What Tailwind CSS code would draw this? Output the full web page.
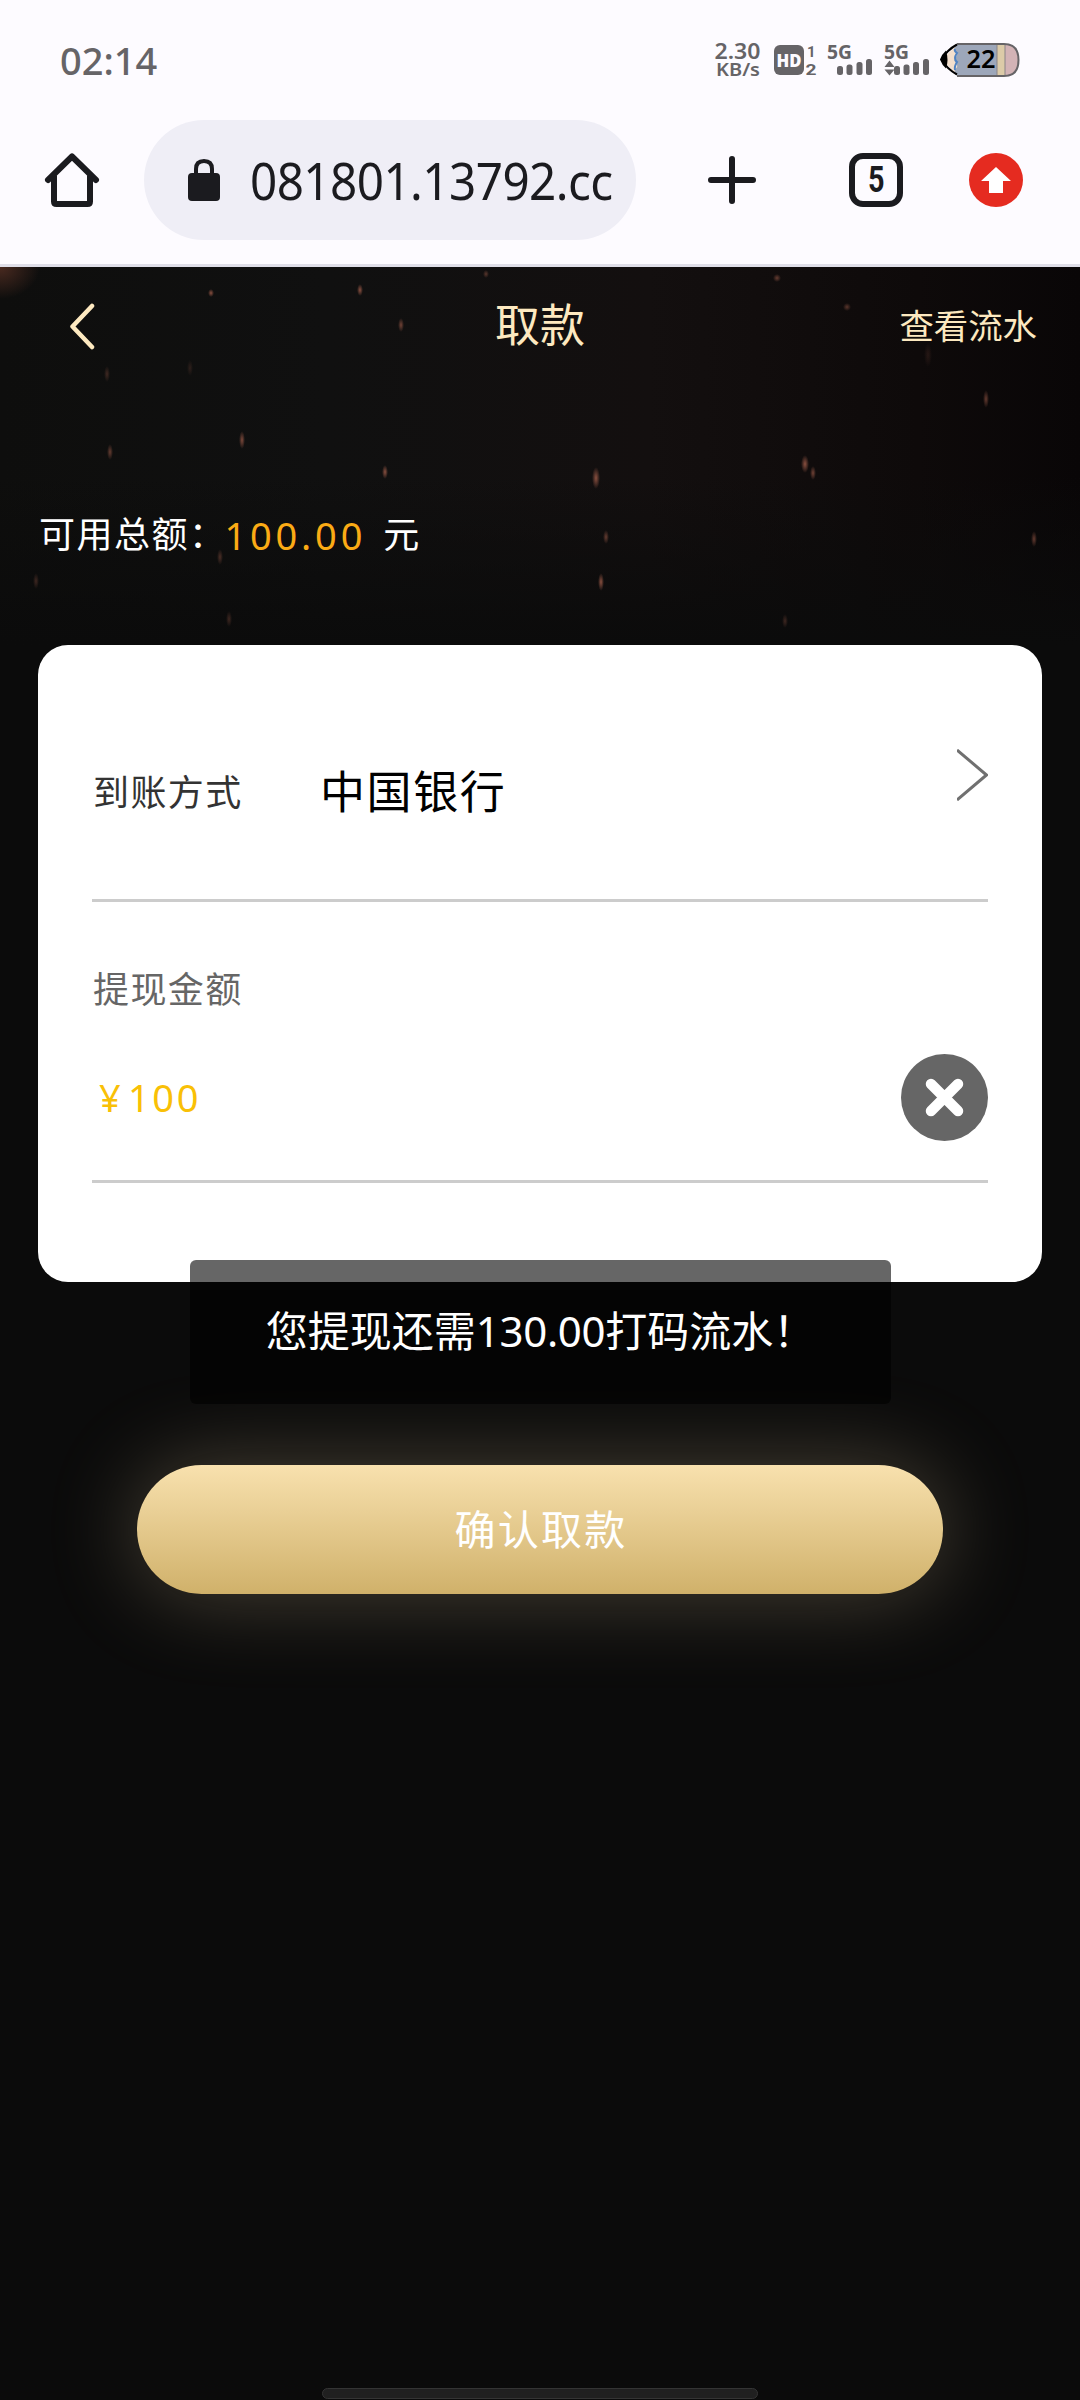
<!DOCTYPE html>
<html lang="zh-CN">
<head>
<meta charset="utf-8">
<title>取款</title>
<script src="https://cdn.jsdelivr.net/npm/@tailwindcss/browser@4"></script>
</head>
<body class="w-[1080px] h-[2400px] overflow-hidden bg-[#0b0b0b] font-['Noto_Sans','Noto_Sans_CJK_SC',sans-serif]">
<div class="relative flex h-[2400px] w-[1080px] flex-col">

  <!-- status bar -->
  <header class="flex h-[267px] flex-col border-b-3 border-[#dfdee8] bg-[#fdfbff]">
    <div class="flex h-[120px] items-center justify-between pl-[60px] pr-[60px] text-[#666467]">
      <span class="text-[38px] leading-[119px] font-medium">02:14</span>
      <svg class="h-[80px] w-[306px]" viewBox="714 20 306 80" fill="#666467">
        <g font-family="Noto Sans, sans-serif" font-weight="600">
          <text x="714.500" y="58.500" font-size="21.500" textLength="46" lengthAdjust="spacingAndGlyphs">2.30</text>
          <text x="716" y="76" font-size="18" textLength="44" lengthAdjust="spacingAndGlyphs">KB/s</text>
          <rect x="774" y="45" width="30" height="30" rx="6"/>
          <text x="776.500" y="67" font-size="18" font-weight="900" fill="#fdfbff" textLength="25" lengthAdjust="spacingAndGlyphs">HD</text>
          <g font-family="Roboto, sans-serif">
            <text x="807" y="56.500" font-size="15" font-weight="700">1</text>
            <text x="805.500" y="74.500" font-size="15" font-weight="700" textLength="11" lengthAdjust="spacingAndGlyphs">2</text>
          </g>
          <text x="827" y="59" font-size="19" font-weight="700" textLength="25" lengthAdjust="spacingAndGlyphs">5G</text>
          <text x="884" y="59" font-size="19" font-weight="700" textLength="25" lengthAdjust="spacingAndGlyphs">5G</text>
        </g>
        <rect x="837" y="66" width="6" height="9" rx="2.500"/><rect x="846.500" y="64.500" width="6" height="10.500" rx="2.500"/><rect x="856.500" y="62" width="6" height="13" rx="2.500"/><rect x="866" y="59" width="6" height="16" rx="2.500"/>
        <rect x="894" y="66" width="6" height="9" rx="2.500"/><rect x="903.500" y="64.500" width="6" height="10.500" rx="2.500"/><rect x="913" y="62" width="6" height="13" rx="2.500"/><rect x="923" y="59" width="6" height="16" rx="2.500"/>
        <path d="M884.500 67l5-6.500 5 6.500zM884.500 69.500l5 6 5-6z"/>
        <!-- pencil battery -->
        <path d="M957 44H1006Q1018.500 44 1018.500 60T1006 76H957Z" fill="#9da7ba"/>
        <path d="M958 44L942 59.500L958 76Z" fill="#f3dfcd"/>
        <path d="M958 44q-5 4-3 7 4 2 1 6-3 3 0 6 3 4-1 6-1 4 3 7h5V44z" fill="#9da7ba"/>
        <path d="M955 49q-1 2 2 4-4 6 0 9-3 5-2 8" fill="none" stroke="#4f83c4" stroke-width="2"/>
        <rect x="997" y="44" width="8" height="32" fill="#dccba8"/>
        <path d="M1005 44q13.500 0 13.500 16T1005 76z" fill="#d3b3b6"/>
        <path d="M997 45v30M1005 45v30" stroke="#8a8486"/>
        <path d="M957 44H1004Q1018.500 44 1018.500 60T1004 76H957" fill="none" stroke="#666467" stroke-width="2"/>
        <path d="M957 44.500Q947 50 941.500 59.500Q947 69 957 74.500" fill="none" stroke="#000" stroke-width="2"/>
        <path d="M946 50.500Q942 54 940 59.500Q942 65 946 68.500Q949 60 946 50.500Z" fill="#000"/>
        <text x="966.500" y="67.500" font-size="25" font-weight="600" fill="#000" font-family="Noto Sans, sans-serif" textLength="29" lengthAdjust="spacingAndGlyphs">22</text>
      </svg>
    </div>
    <!-- browser bar -->
    <div class="flex h-[120px] items-center">
      <svg class="ml-[42px] h-[60px] w-[60px]" viewBox="42 150 60 60" fill="none" stroke="#1b1b1f" stroke-width="6" stroke-linecap="round" stroke-linejoin="round"><path d="M48 180L72 156.500L96 180M54 176V201.500Q54 204 56.500 204H87.500Q90 204 90 201.500V176"/></svg>
      <div class="ml-[42px] flex h-[120px] w-[492px] items-center rounded-full bg-[#efeef6] pl-[44px]">
        <svg class="h-[44px] w-[32px] shrink-0" viewBox="188 157 32 44"><rect x="188" y="172" width="32" height="28" rx="4" fill="#1b1b1f"/><path d="M196 174V168Q196 160 204 160T212 168V174" fill="none" stroke="#1b1b1f" stroke-width="4"/></svg>
        <span class="ml-[30px] w-[362px] origin-left scale-x-[.934] text-[51px] leading-[122px] tracking-[-0.6px] whitespace-nowrap text-[#1b1b1f]">081801.13792.cc</span>
      </div>
      <svg class="ml-[69px] h-[60px] w-[54px]" viewBox="705 150 54 60" stroke="#1b1b1f" stroke-width="6" stroke-linecap="round"><path d="M732 159V201M711 180H753"/></svg>
      <div class="ml-[90px] flex h-[54px] w-[54px] items-center justify-center rounded-[14px] border-6 border-[#1b1b1f] font-['Roboto'] text-[36px] font-bold text-[#1b1b1f]"><span class="scale-x-80">5</span></div>
      <svg class="ml-[66px] h-[54px] w-[54px]" viewBox="0 0 54 54"><circle cx="27" cy="27" r="27" fill="#e52b20"/><path d="M27 14L42 28H34V40H20V28H12Z" fill="#fff"/></svg>
    </div>
  </header>

  <!-- page -->
  <main class="relative flex flex-1 flex-col">
    <svg class="absolute inset-x-0 top-0 h-[378px] w-[1080px]" viewBox="0 267 1080 378">
      <defs>
        <radialGradient id="corner"><stop offset="0" stop-color="#4a2a20"/><stop offset="1" stop-color="#4a2a20" stop-opacity="0"/></radialGradient>
        <linearGradient id="sky"><stop offset="0" stop-color="#0e0e0d"/><stop offset=".3" stop-color="#101010"/><stop offset=".6" stop-color="#130f0f"/><stop offset=".85" stop-color="#0e0a0a"/><stop offset="1" stop-color="#090607"/></linearGradient>
        <linearGradient id="fade" x2="0" y2="1"><stop offset=".55" stop-color="#0b0b0b" stop-opacity="0"/><stop offset="1" stop-color="#0b0b0b"/></linearGradient>
        <radialGradient id="ember"><stop offset="0" stop-color="#8a5040"/><stop offset="1" stop-color="#8a5040" stop-opacity="0"/></radialGradient>
      </defs>
      <rect y="267" width="1080" height="378" fill="url(#sky)"/>
      <rect y="267" width="1080" height="378" fill="url(#fade)"/>
      <ellipse cx="0" cy="267" rx="40" ry="32" fill="url(#corner)"/>
      <g fill="url(#ember)">
        <ellipse cx="211" cy="293" rx="3" ry="4"/><ellipse cx="360" cy="290" rx="3" ry="6"/><ellipse cx="486" cy="274" rx="3" ry="4" opacity=".6"/><ellipse cx="777" cy="278" rx="4" ry="4" opacity=".7"/><ellipse cx="847" cy="307" rx="4" ry="4" opacity=".6"/>
        <ellipse cx="401" cy="325" rx="3" ry="7" opacity=".8"/><ellipse cx="107" cy="374" rx="3" ry="8" opacity=".4"/><ellipse cx="190" cy="368" rx="3" ry="8" opacity=".25"/><ellipse cx="928" cy="355" rx="4" ry="12" opacity=".2"/><ellipse cx="986" cy="399" rx="3" ry="9" opacity=".7"/>
        <ellipse cx="242" cy="440" rx="3" ry="9" opacity=".9"/><ellipse cx="110" cy="452" rx="3" ry="8" opacity=".7"/><ellipse cx="385" cy="472" rx="3" ry="7"/><ellipse cx="596" cy="478" rx="4" ry="11"/><ellipse cx="805" cy="464" rx="4" ry="9"/><ellipse cx="813" cy="473" rx="3" ry="7" opacity=".8"/>
        <ellipse cx="606" cy="537" rx="3" ry="7" opacity=".7"/><ellipse cx="1034" cy="539" rx="3" ry="8" opacity=".7"/><ellipse cx="220" cy="557" rx="3" ry="8" opacity=".5"/><ellipse cx="36" cy="581" rx="3" ry="8" opacity=".4"/><ellipse cx="601" cy="582" rx="3" ry="9"/><ellipse cx="229" cy="619" rx="3" ry="8" opacity=".4"/><ellipse cx="785" cy="621" rx="3" ry="7" opacity=".4"/>
      </g>
    </svg>

    <nav class="relative flex h-[116px] items-center justify-between pl-[68px] pr-[43px] text-[#fde9c0]">
      <svg class="h-[50px] w-[136px]" viewBox="68 300 136 50" fill="none" stroke="#fde9c0" stroke-width="4.500" stroke-linecap="round" stroke-linejoin="round"><path d="M92 306L72.500 326.500L92 347"/></svg>
      <h1 class="absolute inset-x-0 top-0 text-center text-[45px] leading-[115px]">取款</h1>
      <a class="text-[34.400px] leading-[113px]">查看流水</a>
    </nav>

    <div class="relative flex h-[262px] items-start pl-[39px] pt-[102px] text-[36px] leading-[100px] tracking-[1.500px] text-white">
      <span>可用总额：</span><span class="-ml-[2px] text-[38px] tracking-[3.800px] text-[#fbab15]">100.00</span><span class="ml-[17px]">元</span>
    </div>

    <section class="relative mx-[38px] flex h-[637px] flex-col rounded-[30px] bg-white px-[54px]">
      <div class="flex h-[257px] items-center border-b-3 border-[#ccc] pt-[38px]">
        <span class="mt-[4px] w-[228px] pl-px text-[36px] tracking-[1.400px] text-[#333]">到账方式</span>
        <span class="mt-[2px] flex-1 text-[45px] tracking-[1.600px] text-black">中国银行</span>
        <svg class="mb-[32px] h-[52px] w-[31px]" viewBox="0 0 31 52" fill="none" stroke="#707070" stroke-width="3"><path d="M0 1L29.500 26L0 51"/></svg>
      </div>
      <div class="flex h-[281px] flex-col border-b-3 border-[#ccc]">
        <span class="mt-[38px] pl-px text-[36px] leading-[100px] tracking-[1.400px] text-[#666]">提现金额</span>
        <div class="mt-[14px] flex h-[86px] items-center justify-between">
          <span class="pl-[7px] text-[38px] leading-[86px] tracking-[2.600px] text-[#f9c006]"><span class="mr-[5px] inline-block w-[24px] tracking-normal">¥</span>100</span>
          <svg class="h-[87px] w-[87px]" viewBox="0 0 87 87"><circle cx="43.500" cy="43.500" r="43.500" fill="#666"/><path d="M30 30L57 57M57 30L30 57" stroke="#fff" stroke-width="10.500" stroke-linecap="round"/></svg>
        </div>
      </div>
    </section>

    <button class="relative mx-auto mt-[183px] h-[129px] w-[806px] rounded-full bg-linear-to-b from-[#f8e1ae] to-[#d0b16a] pl-[2px] text-[41px] tracking-[2.200px] text-white shadow-[0_0_90px_rgba(246,223,172,0.270)]">确认取款</button>
  </main>

  <!-- toast -->
  <div class="absolute left-[190px] top-[1260px] flex h-[144px] w-[701px] justify-center rounded-[6px] bg-black/60 text-[42px] leading-[142px] whitespace-nowrap text-white">您提现还需<span class="tracking-[-0.300px]">130.00</span>打码流水！</div>
  <!-- gesture bar -->
  <div class="absolute left-[322px] top-[2388px] h-[11px] w-[436px] rounded-full border border-[#343434] bg-[#202020]"></div>
</div>
</body>
</html>
